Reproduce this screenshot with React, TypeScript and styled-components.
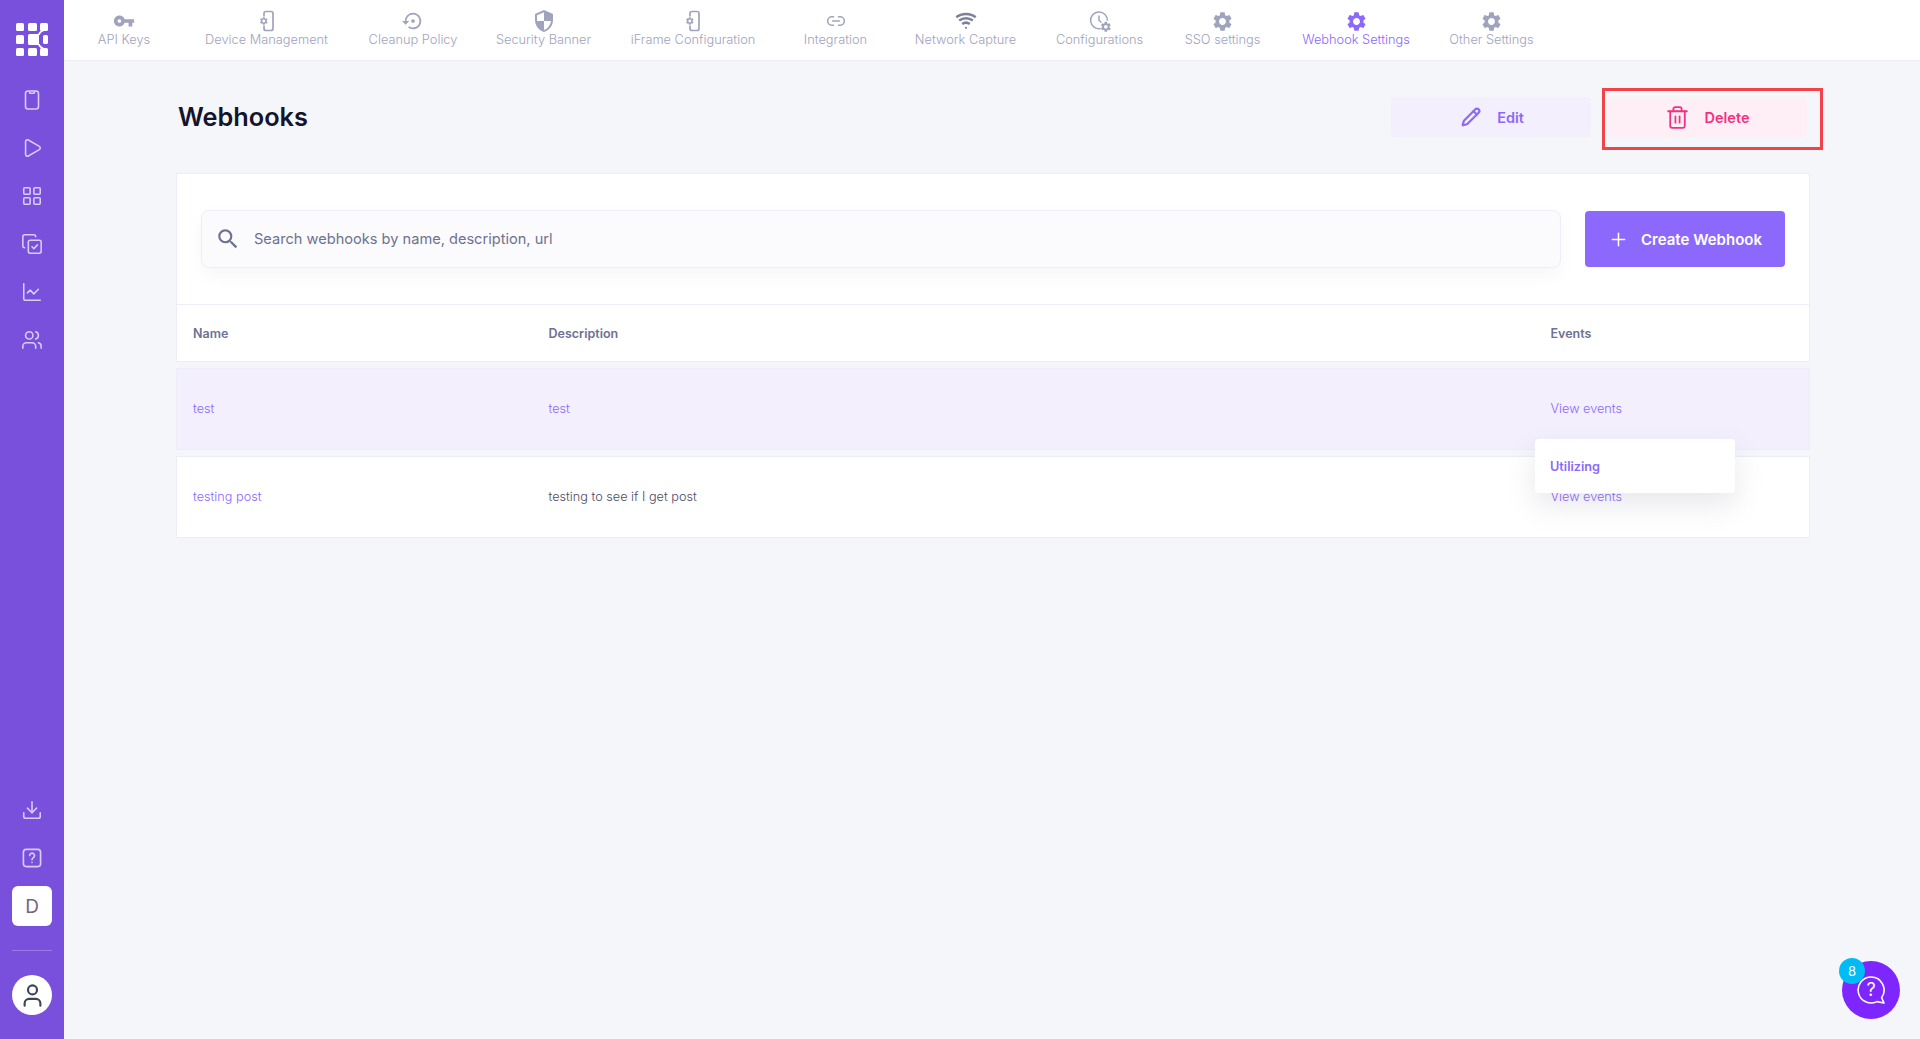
import React from "react";
import styled, { createGlobalStyle } from "styled-components";
import { ChartLine, CopyCheck, Download, LayoutGrid, Link2, Pencil, Play, Plus, Trash2, User, Users } from "lucide-react";
import { MdSearch, MdSecurity, MdSettings, MdSettingsBackupRestore, MdVpnKey } from "react-icons/md";

const GEAR =
  "M19.14 12.94c.04-.3.06-.61.06-.94 0-.32-.02-.64-.07-.94l2.03-1.58c.18-.14.23-.41.12-.61l-1.92-3.32c-.12-.22-.37-.29-.59-.22l-2.39.96c-.5-.38-1.03-.7-1.62-.94l-.36-2.54c-.04-.24-.24-.41-.48-.41h-3.84c-.24 0-.43.17-.47.41l-.36 2.54c-.59.24-1.13.57-1.62.94l-2.39-.96c-.22-.08-.47 0-.59.22L2.74 8.87c-.12.21-.08.47.12.61l2.03 1.58c-.05.3-.09.63-.09.94s.02.64.07.94l-2.03 1.58c-.18.14-.23.41-.12.61l1.92 3.32c.12.22.37.29.59.22l2.39-.96c.5.38 1.03.7 1.62.94l.36 2.54c.05.24.24.41.48.41h3.84c.24 0 .44-.17.47-.41l.36-2.54c.59-.24 1.13-.56 1.62-.94l2.39.96c.22.08.47 0 .59-.22l1.92-3.32c.12-.22.07-.47-.12-.61l-2.01-1.58zM12 15.6c-1.98 0-3.6-1.62-3.6-3.6s1.62-3.6 3.6-3.6 3.6 1.62 3.6 3.6-1.62 3.6-3.6 3.6z";

const GlobalStyle = createGlobalStyle`
  * { box-sizing: border-box; }
  html, body { margin: 0; height: 100%; }
  body {
    background: #f5f6fa;
    font-family: Inter, "Open Sans", "Liberation Sans", sans-serif;
    overflow: hidden;
  }
`;

const Shell = styled.div`
  display: flex;
  height: 100vh;
`;

const Sidebar = styled.aside`
  width: 64px;
  flex: none;
  background: #7850dc;
  display: flex;
  flex-direction: column;
  align-items: center;
  padding: 23px 0 24px;
`;

const LogoMark = styled.svg`
  width: 32px;
  height: 33px;
  margin-bottom: 20px;
`;

const SideButton = styled.div`
  width: 48px;
  height: 48px;
  flex: none;
  display: flex;
  align-items: center;
  justify-content: center;
  color: #d9cdf6;
`;

const SideSpacer = styled.div`
  flex: 1;
`;

const WorkspaceTile = styled.div`
  width: 40px;
  height: 40px;
  margin-top: 4px;
  border-radius: 6px;
  background: #fff;
  color: #75657d;
  font-size: 19px;
  display: flex;
  align-items: center;
  justify-content: center;
`;

const SideRule = styled.div`
  width: 40px;
  height: 1px;
  margin: 24px 0;
  background: rgba(255, 255, 255, 0.25);
`;

const Avatar = styled.div`
  width: 40px;
  height: 40px;
  border-radius: 50%;
  background: #fff;
  color: #3d4358;
  display: flex;
  align-items: center;
  justify-content: center;
`;

const Main = styled.main`
  flex: 1;
  min-width: 0;
  display: flex;
  flex-direction: column;
`;

const TopNav = styled.nav`
  height: 61px;
  flex: none;
  background: #fff;
  border-bottom: 1px solid #ededf2;
  display: flex;
`;

const NavItem = styled.div<{ $width: number; $active?: boolean }>`
  width: ${(p) => p.$width}px;
  flex: none;
  display: flex;
  flex-direction: column;
  align-items: center;
  color: ${(p) => (p.$active ? "#8c68fc" : "#a0a3bd")};
`;

const NavIcon = styled.div<{ $dark?: boolean }>`
  height: 24px;
  margin-top: 9px;
  display: flex;
  align-items: center;
  justify-content: center;
  color: ${(p) => (p.$dark ? "#7e809a" : "inherit")};
`;

const NavLabel = styled.span`
  margin-top: -1px;
  font-size: 12.8px;
  font-weight: 300;
  line-height: 16px;
  white-space: nowrap;
`;

const Content = styled.div`
  flex: 1;
  padding: 36px 110px 0 112px;
`;

const TitleRow = styled.div`
  display: flex;
  align-items: center;
  gap: 16px;
  height: 40px;
  padding: 0 3px 0 2px;
  margin-bottom: 36px;
`;

const Title = styled.h1`
  flex: 1;
  margin: 0;
  padding-bottom: 2px;
  font-size: 25.3px;
  font-weight: 600;
  color: #14142b;
`;

const ActionButton = styled.button<{ $tone: "edit" | "delete" }>`
  position: relative;
  width: 200px;
  height: 40px;
  border: 0;
  border-radius: 4px;
  display: flex;
  align-items: center;
  justify-content: center;
  gap: ${(p) => (p.$tone === "edit" ? "16px" : "15px")};
  padding: 0 0 0 ${(p) => (p.$tone === "edit" ? "3px" : "0")};
  font: 600 14.5px Inter, sans-serif;
  background: ${(p) => (p.$tone === "edit" ? "#f3effd" : "#fdeff5")};
  color: ${(p) => (p.$tone === "edit" ? "#8c68fc" : "#f5307f")};
`;

const Highlight = styled.span`
  position: absolute;
  inset: -9px -16px -13px -5px;
  border: 3px solid #f4424a;
  pointer-events: none;
`;

const Panel = styled.section`
  background: #fff;
  border: 1px solid #ecedf6;
`;

const SearchBar = styled.div`
  display: flex;
  align-items: center;
  gap: 24px;
  padding: 36px 24px 36px 24px;
`;

const SearchField = styled.div`
  flex: 1;
  height: 58px;
  display: flex;
  align-items: center;
  gap: 13px;
  padding: 0 13px;
  background: #fbfbfd;
  border: 1px solid #eeeef8;
  border-radius: 8px;
  box-shadow: 0 8px 16px rgba(110, 113, 145, 0.06);
  color: #6e7191;
`;

const SearchText = styled.span`
  font-size: 14.6px;
  font-weight: 400;
  color: #6e7191;
`;

const CreateButton = styled.button`
  width: 200px;
  height: 56px;
  border: 0;
  border-radius: 4px;
  background: #8c68fc;
  color: #fff;
  display: flex;
  align-items: center;
  justify-content: center;
  gap: 12px;
  font: 600 15px Inter, sans-serif;
`;

const TableRow = styled.div`
  display: grid;
  grid-template-columns: 355.5px 1002px 1fr;
  align-items: center;
  padding-left: 16px;
`;

const HeadRow = styled(TableRow)`
  height: 57px;
  border-top: 1px solid #ecedf6;
  font-size: 12.5px;
  font-weight: 600;
  color: #6e7191;
`;

const BodyRow = styled(TableRow)<{ $selected?: boolean }>`
  position: relative;
  height: 82px;
  margin-top: 6px;
  border: 1px solid #ecedf6;
  padding: 0 0 2px 16px;
  background: ${(p) => (p.$selected ? "#f3effd" : "#fff")};
  font-size: 12.7px;
  font-weight: 300;
`;

const CellLink = styled.span`
  color: #8c68fc;
`;

const CellText = styled.span`
  color: #4e4b66;
`;

const EventsMenu = styled.div`
  position: absolute;
  left: 1358px;
  top: 70px;
  z-index: 2;
  width: 200px;
  height: 54px;
  display: flex;
  align-items: center;
  padding-left: 15px;
  background: #fff;
  border-radius: 4px;
  box-shadow: 0 12px 28px rgba(110, 113, 145, 0.16);
  font-size: 12.7px;
  font-weight: 600;
  color: #8c68fc;
`;

const HelpBubble = styled.div`
  position: fixed;
  right: 20px;
  bottom: 20px;
  width: 58px;
  height: 58px;
  border-radius: 50%;
  background: #7d26ff;
  display: flex;
  align-items: center;
  justify-content: center;
`;

const HelpBadge = styled.span`
  position: absolute;
  left: -3px;
  top: -3px;
  width: 26px;
  height: 26px;
  border-radius: 50%;
  background: #00bcf5;
  color: #fff;
  font-size: 13px;
  display: flex;
  align-items: center;
  justify-content: center;
`;

const Logo = () => (
  <LogoMark viewBox="0 0 32 33" fill="#fff">
    <rect x="0" y="0" width="8" height="8" rx="1.5" />
    <rect x="12" y="0" width="9" height="8" rx="1.5" />
    <rect x="24" y="0" width="8" height="8" rx="1.5" />
    <rect x="0" y="12" width="8" height="9" rx="1.5" />
    <rect x="12" y="11" width="11" height="11" rx="1.5" />
    <rect x="27" y="12" width="5" height="9" rx="1.5" />
    <rect x="0" y="25" width="8" height="8" rx="1.5" />
    <rect x="12" y="25" width="9" height="8" rx="1.5" />
    <rect x="24" y="25" width="8" height="8" rx="1.5" />
    <path d="M22.5 12 Q24 8.5 28 7 M22.5 21 Q24 24.5 28 26" stroke="#fff" strokeWidth="1.8" fill="none" />
  </LogoMark>
);

const PhoneIcon = () => (
  <svg width="22" height="22" viewBox="0 0 22 22" fill="none" stroke="currentColor" strokeWidth="1.6">
    <rect x="4.5" y="2" width="13" height="18" rx="2.5" />
    <path d="M8.5 2.4 V3.4 a.8 .8 0 0 0 .8 .8 h3.4 a.8 .8 0 0 0 .8 -.8 V2.4" />
  </svg>
);

const HelpSquare = () => (
  <svg width="22" height="22" viewBox="0 0 20 20" fill="none" stroke="currentColor" strokeWidth="1.5" strokeLinecap="round">
    <rect x="2.2" y="2.2" width="15.6" height="15.6" rx="2.5" />
    <path d="M7.9 7.8 a2.2 2.2 0 1 1 3.4 1.9 c-.8 .5 -1.3 .9 -1.3 1.8" />
    <path d="M10 14 v.1" />
  </svg>
);

const DeviceIcon = () => (
  <svg width="24" height="24" viewBox="0 0 24 24" fill="none" stroke="currentColor" strokeWidth="1.7">
    <path d="M9 7.5 V4.5 a2 2 0 0 1 2 -2 h5 a2 2 0 0 1 2 2 v15 a2 2 0 0 1 -2 2 h-5 a2 2 0 0 1 -2 -2 V16.5" />
    <g transform="translate(4 7.2) scale(.4)">
      <path d={GEAR} fill="currentColor" stroke="none" />
    </g>
  </svg>
);

const WifiIcon = () => (
  <svg width="22" height="18" viewBox="0 0 22 18" fill="none" stroke="currentColor" strokeWidth="2.5">
    <path d="M1.3 5.2 C6.5 .8 15.5 .8 20.7 5.2" />
    <path d="M4.2 8.6 C8 5.6 14 5.6 17.8 8.6" />
    <path d="M7.2 12 C9.5 10.3 12.5 10.3 14.8 12" />
    <circle cx="11" cy="15.8" r="1.1" fill="currentColor" stroke="none" />
  </svg>
);

const ConfigIcon = () => (
  <svg width="24" height="24" viewBox="0 0 24 24" fill="none" stroke="currentColor" strokeWidth="1.5">
    <path d="M12.6 19.6 A8.4 8.4 0 1 1 19.4 11.8" />
    <path d="M11 6.5 V11.5 L13.5 13.5" />
    <g transform="translate(11.6 11.6) scale(.52)">
      <path d={GEAR} fill="currentColor" stroke="none" />
    </g>
  </svg>
);

const ChatIcon = () => (
  <svg width="32" height="32" viewBox="0 0 32 32" fill="none" stroke="#fff" strokeWidth="1.6">
    <path d="M16 3 A13 13 0 1 0 22 27.6 L29 29 L26.6 23.6 A13 13 0 0 0 16 3 Z" strokeLinejoin="round" />
    <text x="16" y="22" textAnchor="middle" fontFamily="Inter, sans-serif" fontSize="18" fill="#fff" stroke="none">
      ?
    </text>
  </svg>
);

const navItems: { label: string; width: number; icon: React.ReactNode; active?: boolean; dark?: boolean }[] = [
  { label: "API Keys", width: 120, icon: <MdVpnKey size={22} /> },
  { label: "Device Management", width: 165, icon: <DeviceIcon /> },
  { label: "Cleanup Policy", width: 128, icon: <MdSettingsBackupRestore size={22} /> },
  { label: "Security Banner", width: 133, icon: <MdSecurity size={24} /> },
  { label: "iFrame Configuration", width: 166, icon: <DeviceIcon /> },
  { label: "Integration", width: 119, icon: <Link2 size={20} strokeWidth={1.8} /> },
  { label: "Network Capture", width: 141, icon: <WifiIcon />, dark: true },
  { label: "Configurations", width: 127, icon: <ConfigIcon /> },
  { label: "SSO settings", width: 119, icon: <MdSettings size={23} /> },
  { label: "Webhook Settings", width: 148, icon: <MdSettings size={23} />, active: true },
  { label: "Other Settings", width: 123, icon: <MdSettings size={23} /> },
];

export default function App() {
  return (
    <>
      <GlobalStyle />
      <Shell>
        <Sidebar>
          <Logo />
          <SideButton><PhoneIcon /></SideButton>
          <SideButton><Play size={22} strokeWidth={1.7} /></SideButton>
          <SideButton><LayoutGrid size={22} strokeWidth={1.7} /></SideButton>
          <SideButton><CopyCheck size={22} strokeWidth={1.7} /></SideButton>
          <SideButton><ChartLine size={22} strokeWidth={1.7} /></SideButton>
          <SideButton><Users size={22} strokeWidth={1.7} /></SideButton>
          <SideSpacer />
          <SideButton><Download size={22} strokeWidth={1.7} /></SideButton>
          <SideButton><HelpSquare /></SideButton>
          <WorkspaceTile>D</WorkspaceTile>
          <SideRule />
          <Avatar><User size={27} strokeWidth={1.9} /></Avatar>
        </Sidebar>
        <Main>
          <TopNav>
            {navItems.map((item) => (
              <NavItem key={item.label} $width={item.width} $active={item.active}>
                <NavIcon $dark={item.dark}>{item.icon}</NavIcon>
                <NavLabel>{item.label}</NavLabel>
              </NavItem>
            ))}
          </TopNav>
          <Content>
            <TitleRow>
              <Title>Webhooks</Title>
              <ActionButton $tone="edit">
                <Pencil size={20} strokeWidth={2.6} />
                Edit
              </ActionButton>
              <ActionButton $tone="delete">
                <Trash2 size={25} strokeWidth={1.7} />
                Delete
                <Highlight />
              </ActionButton>
            </TitleRow>
            <Panel>
              <SearchBar>
                <SearchField>
                  <MdSearch size={26} />
                  <SearchText>Search webhooks by name, description, url</SearchText>
                </SearchField>
                <CreateButton>
                  <Plus size={21} strokeWidth={1.8} />
                  Create Webhook
                </CreateButton>
              </SearchBar>
              <HeadRow>
                <span>Name</span>
                <span>Description</span>
                <span>Events</span>
              </HeadRow>
            </Panel>
            <BodyRow $selected>
              <CellLink>test</CellLink>
              <CellLink>test</CellLink>
              <CellLink>View events</CellLink>
              <EventsMenu>Utilizing</EventsMenu>
            </BodyRow>
            <BodyRow>
              <CellLink>testing post</CellLink>
              <CellText>testing to see if I get post</CellText>
              <CellLink>View events</CellLink>
            </BodyRow>
          </Content>
        </Main>
      </Shell>
      <HelpBubble>
        <ChatIcon />
        <HelpBadge>8</HelpBadge>
      </HelpBubble>
    </>
  );
}
